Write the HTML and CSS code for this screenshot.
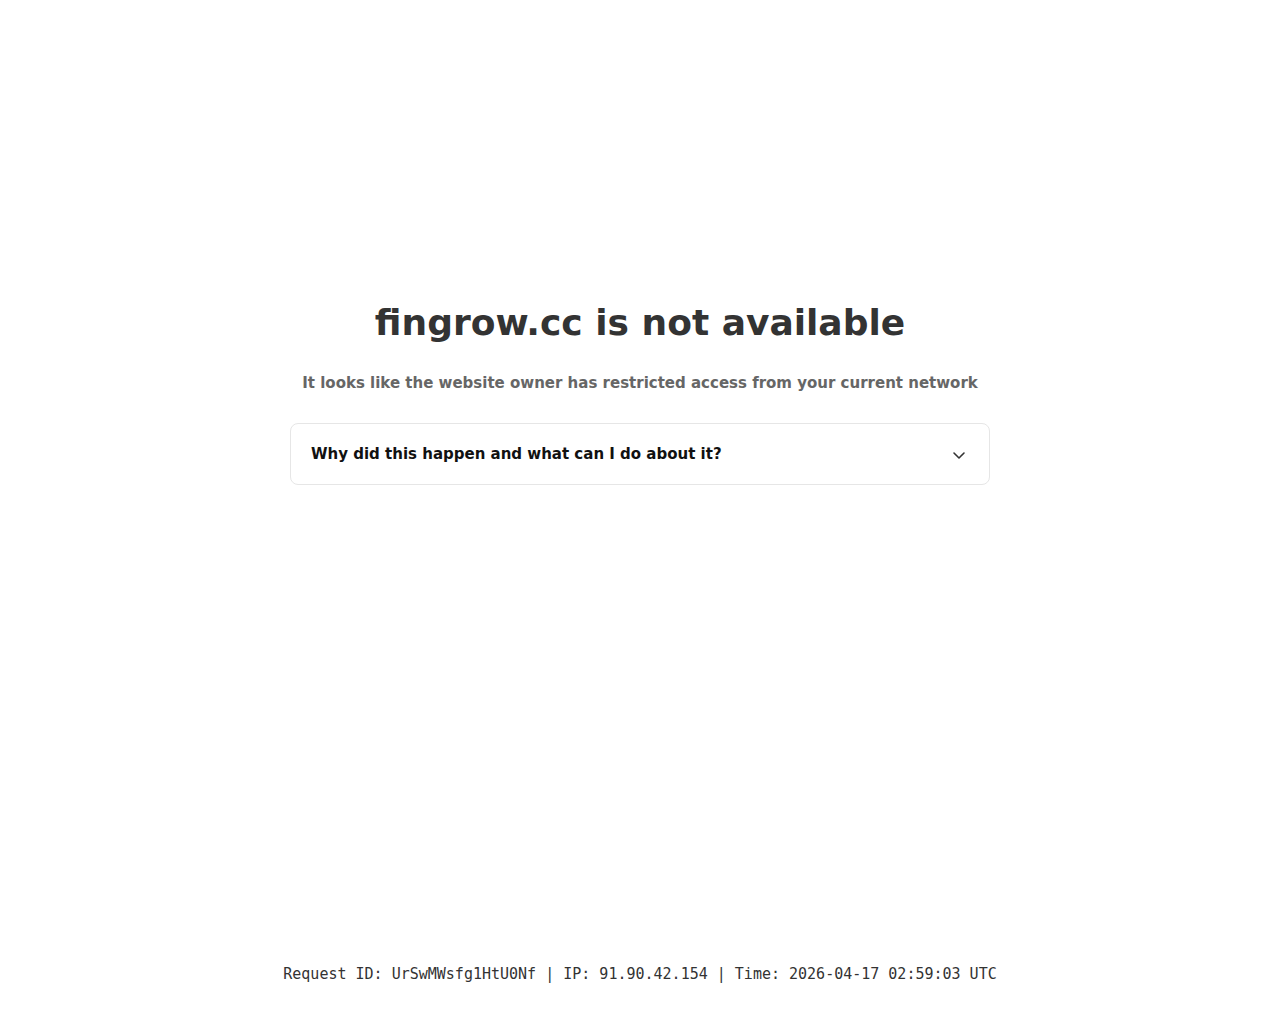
FILE: index.html
```html
<!DOCTYPE html>
<html lang="en">
<head>
<meta charset="utf-8">
<title>fingrow.cc is not available</title>
<link rel="stylesheet" href="styles.css">
</head>
<body>
<main class="page">
  <section class="content">
    <h1 class="title">fingrow.cc is not available</h1>
    <p class="subtitle">It looks like the website owner has restricted access from your current network</p>
    <div class="faq">
      <span class="faq-q">Why did this happen and what can I do about it?</span>
      <svg class="chev" width="16" height="16" viewBox="0 0 16 16" aria-hidden="true"><path d="M3 6l5 5 5-5" fill="none" stroke="#333" stroke-width="1.6" stroke-linecap="round" stroke-linejoin="round"/></svg>
    </div>
  </section>
  <footer class="footer">Request ID: UrSwMWsfg1HtU0Nf | IP: 91.90.42.154 | Time: 2026-04-17 02:59:03 UTC</footer>
</main>
</body>
</html>
```
FILE: styles.css
```css
html, body { margin: 0; padding: 0; background: #fff; }
body { font-family: "DejaVu Sans", sans-serif; color: #333; }
.page { min-height: 1024px; display: flex; flex-direction: column; align-items: center; }
.content { width: 700px; display: flex; flex-direction: column; align-items: center; padding-top: 301px; flex: 1; }
.title { font-size: 36px; font-weight: bold; margin: 0; line-height: 44px; color: #333; }
.subtitle { font-size: 15px; font-weight: bold; color: #666; margin: 27px 0 0; line-height: 22px; text-align: center; white-space: nowrap; }
.faq { box-sizing: border-box; width: 700px; height: 62px; margin-top: 29px; border: 1px solid #e6e6e6; border-radius: 8px; display: flex; align-items: center; justify-content: space-between; padding: 0 22px 0 20px; }
.faq-q { font-size: 15px; font-weight: bold; color: #111; }
.chev { display: block; margin-top: 2px; }
.footer { font-family: "DejaVu Sans Mono", monospace; font-size: 15px; color: #333; padding-bottom: 41px; line-height: 18px; }
```
